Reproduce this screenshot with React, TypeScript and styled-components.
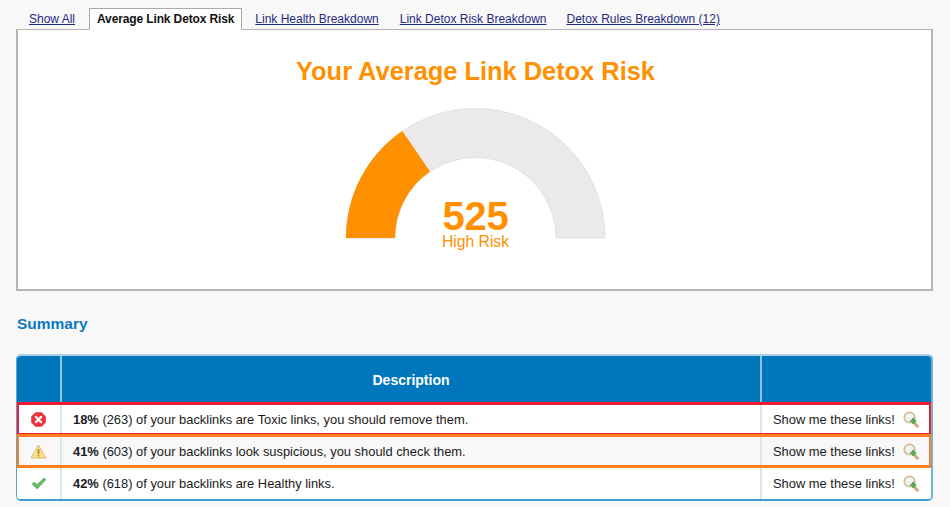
import React from "react";
import styled, { createGlobalStyle } from "styled-components";

const Global = createGlobalStyle`
  html, body { margin: 0; padding: 0; background: #f8f8f8; }
  body { font-family: "Liberation Sans", Arial, sans-serif; width: 950px; height: 507px; overflow: hidden; }
`;
const Page = styled.div`
  padding: 8px 17px 0 16px;
  display: flex;
  flex-direction: column;
`;
const Tabs = styled.nav`
  display: flex;
  height: 22px;
  padding-left: 5px;
  position: relative;
  z-index: 1;
`;
const Tab = styled.a<{ $active?: boolean; $gap: number }>`
  display: block;
  box-sizing: border-box;
  height: 22px;
  padding: ${(p) => (p.$active ? "3px 7px 0" : "4px 8px 0")};
  margin-right: ${(p) => p.$gap}px;
  font-size: 12px;
  line-height: 14px;
  letter-spacing: ${(p) => (p.$active ? "-0.13px" : "0")};
  color: ${(p) => (p.$active ? "#111" : "#1f2a80")};
  font-weight: ${(p) => (p.$active ? 700 : 400)};
  text-decoration: ${(p) => (p.$active ? "none" : "underline")};
  background: ${(p) => (p.$active ? "#fff" : "transparent")};
  border: ${(p) => (p.$active ? "1px solid #aaa" : "none")};
  border-bottom: none;
`;
const Panel = styled.section`
  box-sizing: border-box;
  height: 262px;
  margin-top: -1px;
  padding-left: 2px;
  background: #fff;
  border: 1px solid #b5b5b5;
  border-width: 1px 2px 2px 2px;
  display: flex;
  flex-direction: column;
  align-items: center;
`;
const Title = styled.h1`
  margin: 25px 0 0;
  color: #ff9000;
  font-size: 25.4px;
  line-height: 32px;
  font-weight: 700;
`;
const GaugeBox = styled.div`
  position: relative;
  width: 261px;
  height: 150px;
  margin-top: 21px;
`;
const GaugeSvg = styled.svg`
  display: block;
`;
const GaugeValue = styled.div`
  position: absolute;
  left: 0;
  right: 0;
  top: 90px;
  text-align: center;
  color: #ff9000;
  font-size: 40px;
  line-height: 36px;
  font-weight: 700;
  letter-spacing: -0.3px;
`;
const GaugeLabel = styled.div`
  position: absolute;
  left: 0;
  right: 0;
  top: 126px;
  text-align: center;
  color: #ff9000;
  font-size: 15.7px;
  line-height: 16px;
`;
const Heading = styled.h2`
  margin: 23px 0 0 1px;
  color: #0a79c0;
  font-size: 15.5px;
  line-height: 20px;
  font-weight: 700;
`;
const Table = styled.div`
  box-sizing: border-box;
  margin-top: 20px;
  width: 917px;
  border: 1px solid #56a7d2;
  border-top: 2px solid #a9d2e6;
  border-bottom: 2px solid #3f9ccc;
  border-right: 2px solid #6db3d8;
  border-radius: 5px;
  background: #fff;
  overflow: hidden;
`;
const Row = styled.div<{ $head?: boolean; $alert?: string; $alt?: boolean; $h?: number }>`
  display: grid;
  grid-template-columns: 45px 700px 1fr;
  height: ${(p) => p.$h ?? 32}px;
  background: ${(p) => (p.$head ? "#0077bd" : p.$alt ? "#f8f8f8" : "#fff")};
  color: ${(p) => (p.$head ? "#fff" : "#1a1a1a")};
  position: relative;
  ${(p) => (p.$alert ? `outline: 3px solid ${p.$alert}; outline-offset: -2px; z-index: ${p.$alert === "#ff7f20" ? 2 : 1};` : "")}
`;
const Cell = styled.div<{ $head?: boolean; $center?: boolean; $last?: boolean }>`
  box-sizing: border-box;
  display: flex;
  align-items: center;
  justify-content: ${(p) => (p.$center ? "center" : "flex-start")};
  padding: ${(p) => (p.$center ? "0" : "0 0 0 11px")};
  font-size: ${(p) => (p.$head ? 14 : 12.9)}px;
  border-right: ${(p) => (p.$last ? "none" : `2px solid ${p.$head ? "#8fc3e0" : "#d5e8ea"}`)};
  font-weight: ${(p) => (p.$head ? 700 : 400)};
`;
const LinkText = styled.span`
  margin-right: 8px;
`;

const Err = () => (
  <svg width="15" height="15" viewBox="0 0 16 16">
    <path d="M5 1h6l4 4v6l-4 4H5l-4-4V5z" fill="#f0303a" stroke="#f0303a" strokeLinejoin="round" strokeWidth="1.6" />
    <path d="M5.2 5.2l5.6 5.6M10.8 5.2l-5.6 5.6" stroke="#fff" strokeWidth="2.4" strokeLinecap="round" />
  </svg>
);
const Warn = () => (
  <svg width="17" height="15" viewBox="0 0 17 15">
    <path d="M8.5 1L16 14H1z" fill="#fbe08a" stroke="#dcb878" strokeLinejoin="round" />
    <path d="M8.5 5v5" stroke="#a98a3c" strokeWidth="1.8" />
    <path d="M8.5 11v1.6" stroke="#a98a3c" strokeWidth="1.8" />
  </svg>
);
const Ok = () => (
  <svg width="16" height="13" viewBox="0 0 16 13">
    <path d="M1 7l2.5-2 2.5 2.5L13 1l2 1.5L6.2 12z" fill="#6db56a" stroke="#5aa45c" strokeWidth=".6" strokeLinejoin="round" />
  </svg>
);
const Zoomer = () => (
  <svg width="16" height="17" viewBox="0 0 16 17">
    <path d="M10.5 11l4 4.2" stroke="#d0a878" strokeWidth="2.8" strokeLinecap="round" />
    <circle cx="6.5" cy="6.5" r="5.2" fill="#eef4f2" stroke="#dcbc96" strokeWidth="1.8" />
    <path d="M7.2 10h6M10.2 7v6" stroke="#5aa85c" strokeWidth="2.6" />
  </svg>
);

const rows = [
  { icon: <Err />, pct: "18%", text: " (263) of your backlinks are Toxic links, you should remove them.", alert: "#ee1c2e" },
  { icon: <Warn />, pct: "41%", text: " (603) of your backlinks look suspicious, you should check them.", alert: "#ff7f20", alt: true },
  { icon: <Ok />, pct: "42%", text: " (618) of your backlinks are Healthy links." },
];

export default function App() {
  return (
    <Page>
      <Global />
      <Tabs>
        <Tab href="#" $gap={6}>Show All</Tab>
        <Tab href="#" $active $gap={5}>Average Link Detox Risk</Tab>
        <Tab href="#" $gap={5}>Link Health Breakdown</Tab>
        <Tab href="#" $gap={4}>Link Detox Risk Breakdown</Tab>
        <Tab href="#" $gap={0}>Detox Rules Breakdown (12)</Tab>
      </Tabs>
      <Panel>
        <Title>Your Average Link Detox Risk</Title>
        <GaugeBox>
          <GaugeSvg width="261" height="150" viewBox="0 0 261 150">
            <path d="M1 130 A129.5 129.5 0 0 1 260 130 H211 A80.5 80.5 0 0 0 50 130 Z" fill="#ebe9ea" stroke="#e2e1e2" strokeWidth="1" />
            <path d="M1 130 A129.5 129.5 0 0 1 57.3 23.1 L85 63.6 A80.5 80.5 0 0 0 50 130 Z" fill="#ff9000" />
          </GaugeSvg>
          <GaugeValue>525</GaugeValue>
          <GaugeLabel>High Risk</GaugeLabel>
        </GaugeBox>
      </Panel>
      <Heading>Summary</Heading>
      <Table>
        <Row $head $h={47}>
          <Cell $head />
          <Cell $head $center>Description</Cell>
          <Cell $head $last />
        </Row>
        {rows.map((r) => (
          <Row key={r.pct} $alert={r.alert} $alt={r.alt}>
            <Cell $center>{r.icon}</Cell>
            <Cell>
              <span>
                <b>{r.pct}</b>
                {r.text}
              </span>
            </Cell>
            <Cell $last>
              <LinkText>Show me these links!</LinkText>
              <Zoomer />
            </Cell>
          </Row>
        ))}
      </Table>
    </Page>
  );
}
